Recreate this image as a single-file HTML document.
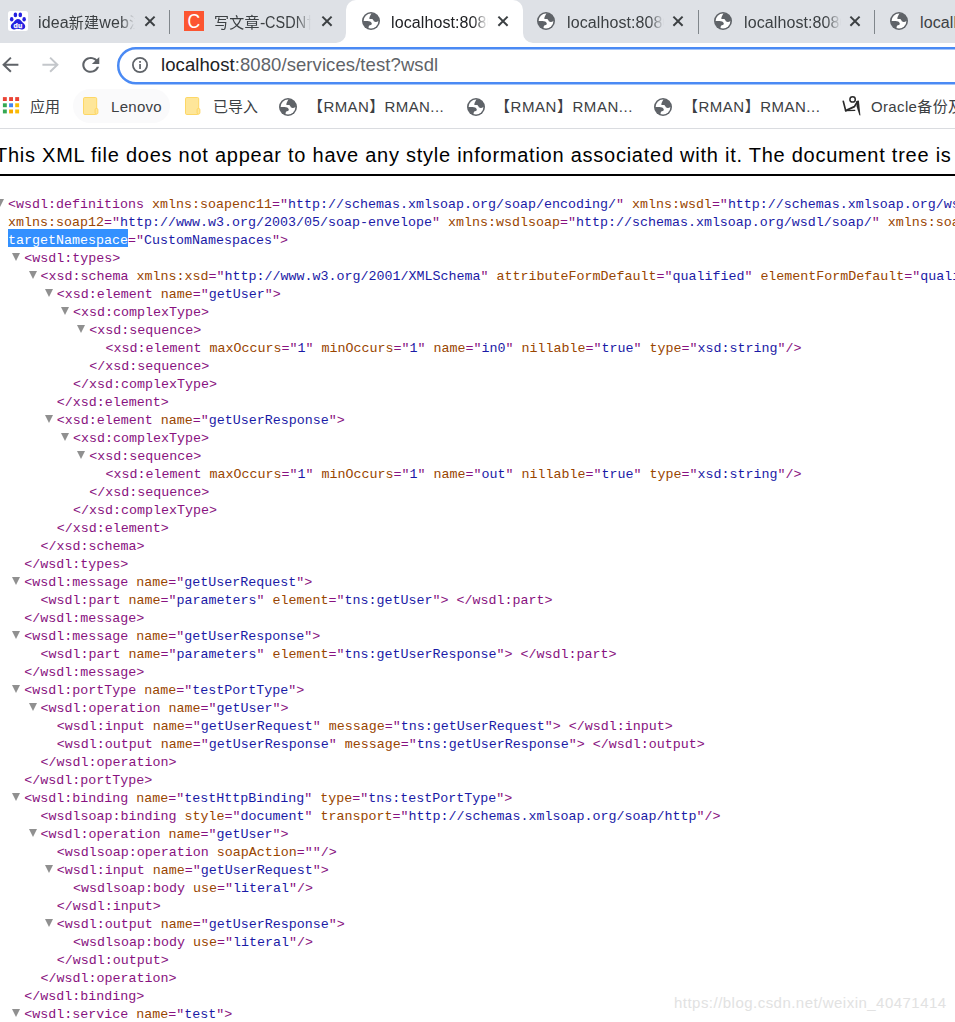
<!DOCTYPE html>
<html lang="zh-CN">
<head>
<meta charset="utf-8">
<title>localhost:8080/services/test?wsdl</title>
<style>
html,body{margin:0;padding:0;}
body{width:955px;height:1022px;overflow:hidden;position:relative;background:#fff;font-family:"Liberation Sans","Noto Sans CJK SC",sans-serif;}
.abs{position:absolute;}
/* ---------- tab strip ---------- */
#tabstrip{position:absolute;left:0;top:0;width:955px;height:43px;background:#dee1e6;}
.tabtitle{position:absolute;top:11px;height:24px;line-height:24px;font-size:16px;letter-spacing:0.1px;color:#3c4043;white-space:nowrap;overflow:hidden;}
.tabtitle span{font-size:15px;letter-spacing:0.3px;}
.tabtitle em{font-style:normal;display:inline-block;transform:scaleX(0.9);transform-origin:0 50%;margin-right:-4.4px;}
.tabtitle.fade{-webkit-mask-image:linear-gradient(90deg,#000 0,#000 calc(100% - 16px),transparent calc(100% - 1px));mask-image:linear-gradient(90deg,#000 0,#000 calc(100% - 16px),transparent calc(100% - 1px));}
.sep{position:absolute;top:10px;width:1px;height:24px;background:#80868b;}
#activetab{position:absolute;left:346px;top:0;width:177px;height:43px;background:#fff;border-radius:10px 10px 0 0;}
/* ---------- toolbar ---------- */
#toolbar{position:absolute;left:0;top:43px;width:955px;height:43px;background:#fff;}
#omni{position:absolute;left:117px;top:47px;width:900px;height:33px;border:2.5px solid #4285f4;border-radius:20px;background:#fff;box-sizing:content-box;}
#url{position:absolute;left:161px;top:53px;height:24px;line-height:24px;font-size:18.5px;letter-spacing:0.08px;color:#5f6368;white-space:nowrap;}
#url em{font-style:normal;color:#202124;}
/* ---------- bookmarks ---------- */
#bookmarks{position:absolute;left:0;top:86px;width:955px;height:42px;background:#fff;border-bottom:1px solid #dadce0;}
.bm{position:absolute;top:95px;height:24px;line-height:24px;font-size:15px;color:#3c4043;white-space:nowrap;}
#pill{position:absolute;left:73px;top:89px;width:97px;height:34px;border-radius:17px;background:#fafafb;}
/* ---------- page ---------- */
#hdr{position:absolute;left:-5px;top:141px;height:28px;line-height:28px;font-size:20px;letter-spacing:0.75px;color:#000;white-space:nowrap;}
#rule{position:absolute;left:0;top:174px;width:955px;height:1.5px;background:#000;}
#xml{position:absolute;left:0;top:193px;width:955px;overflow:hidden;font-family:"Liberation Mono","Noto Sans CJK SC",monospace;font-size:13.333px;color:#881280;}
#xml .l{height:18px;line-height:23px;white-space:pre;position:relative;}
#xml i{font-style:normal;color:#994500;}
#xml b{font-weight:normal;color:#1a1aa6;}
#xml u{text-decoration:none;color:#000;}
#xml mark{background:#3390ff;color:#fff;display:inline-block;height:18px;line-height:23px;vertical-align:top;overflow:hidden;}
#xml s{position:absolute;margin-left:-12px;top:6px;width:0;height:0;border-left:4.5px solid transparent;border-right:4.5px solid transparent;border-top:8px solid #909090;text-decoration:none;}
#wm{position:absolute;left:674px;top:994px;font-size:15px;line-height:18px;color:#e2e2e2;white-space:nowrap;letter-spacing:0.47px;}
</style>
</head>
<body>
<!-- TAB STRIP -->
<div id="tabstrip">
  <div id="activetab"></div>
  <svg class="abs" style="left:336px;top:33px" width="10" height="10" viewBox="0 0 10 10"><path d="M10 0 V10 H0 A10 10 0 0 0 10 0Z" fill="#fff"/></svg>
  <svg class="abs" style="left:523px;top:33px" width="10" height="10" viewBox="0 0 10 10"><path d="M0 0 V10 H10 A10 10 0 0 1 0 0Z" fill="#fff"/></svg>
  <svg class="abs" style="left:8px;top:11px" width="20" height="20" viewBox="0 0 20 20"><rect x="0" y="0" width="20" height="20" rx="2.5" fill="#fff"/><g fill="#2420e0"><ellipse cx="3.7" cy="8.2" rx="1.75" ry="2.2"/><ellipse cx="7.4" cy="3.9" rx="1.8" ry="2.4"/><ellipse cx="12.3" cy="3.9" rx="1.8" ry="2.4"/><ellipse cx="16.1" cy="8.2" rx="1.75" ry="2.2"/><path d="M10 7.9 C12 7.9 13 9.6 14.4 11.2 C16 12.8 17.4 13.6 17.2 15.8 C17 17.8 15.4 18.6 13.6 18.4 C12.2 18.2 11.2 18 10 18 C8.8 18 7.8 18.2 6.4 18.4 C4.6 18.6 3 17.8 2.8 15.8 C2.6 13.6 4 12.8 5.6 11.2 C7 9.6 8 7.9 10 7.9Z"/></g><text x="9.9" y="16.6" font-family="Liberation Sans,sans-serif" font-size="7" font-weight="bold" fill="#fff" stroke="#fff" stroke-width="0.25" text-anchor="middle">du</text></svg><svg class="abs" style="left:184px;top:11px" width="20" height="20" viewBox="0 0 20 20"><rect width="20" height="20" fill="#fc5531"/><text transform="translate(9.9 17.4) scale(0.86 1)" font-family="Liberation Sans,sans-serif" font-size="20.4" fill="#fff" text-anchor="middle">C</text></svg><svg class="abs" style="left:362.0px;top:12.0px" width="18" height="18" viewBox="0 0 18 18"><circle cx="9" cy="9" r="9" fill="#5f6368"/><circle cx="9" cy="9" r="7.4" fill="#fff"/><clipPath id="g371"><circle cx="9" cy="9" r="8"/></clipPath><g clip-path="url(#g371)" fill="#5f6368"><path d="M9.6 1 C8.6 3 7.6 4.6 7.3 6.3 C7.2 7 8 7 9 7 C10.6 6.9 11.2 7.4 11.5 8.6 C11.8 9.8 13 10 14.2 9.9 C15.5 9.8 16.6 9.2 18 8 V0 H9.6Z"/><path d="M0 9.1 H5.6 C7.6 9.2 8.9 9.6 9.6 11 C10.2 12.3 9.4 13 8 13.2 C6.8 13.4 6.8 14.2 6.6 15.4 C6.5 16.3 6.2 17 5.8 18 H0Z"/></g></svg><svg class="abs" style="left:537.0px;top:12.0px" width="18" height="18" viewBox="0 0 18 18"><circle cx="9" cy="9" r="9" fill="#5f6368"/><circle cx="9" cy="9" r="7.4" fill="#fff"/><clipPath id="g546"><circle cx="9" cy="9" r="8"/></clipPath><g clip-path="url(#g546)" fill="#5f6368"><path d="M9.6 1 C8.6 3 7.6 4.6 7.3 6.3 C7.2 7 8 7 9 7 C10.6 6.9 11.2 7.4 11.5 8.6 C11.8 9.8 13 10 14.2 9.9 C15.5 9.8 16.6 9.2 18 8 V0 H9.6Z"/><path d="M0 9.1 H5.6 C7.6 9.2 8.9 9.6 9.6 11 C10.2 12.3 9.4 13 8 13.2 C6.8 13.4 6.8 14.2 6.6 15.4 C6.5 16.3 6.2 17 5.8 18 H0Z"/></g></svg><svg class="abs" style="left:714.0px;top:12.0px" width="18" height="18" viewBox="0 0 18 18"><circle cx="9" cy="9" r="9" fill="#5f6368"/><circle cx="9" cy="9" r="7.4" fill="#fff"/><clipPath id="g723"><circle cx="9" cy="9" r="8"/></clipPath><g clip-path="url(#g723)" fill="#5f6368"><path d="M9.6 1 C8.6 3 7.6 4.6 7.3 6.3 C7.2 7 8 7 9 7 C10.6 6.9 11.2 7.4 11.5 8.6 C11.8 9.8 13 10 14.2 9.9 C15.5 9.8 16.6 9.2 18 8 V0 H9.6Z"/><path d="M0 9.1 H5.6 C7.6 9.2 8.9 9.6 9.6 11 C10.2 12.3 9.4 13 8 13.2 C6.8 13.4 6.8 14.2 6.6 15.4 C6.5 16.3 6.2 17 5.8 18 H0Z"/></g></svg><svg class="abs" style="left:890.0px;top:12.0px" width="18" height="18" viewBox="0 0 18 18"><circle cx="9" cy="9" r="9" fill="#5f6368"/><circle cx="9" cy="9" r="7.4" fill="#fff"/><clipPath id="g899"><circle cx="9" cy="9" r="8"/></clipPath><g clip-path="url(#g899)" fill="#5f6368"><path d="M9.6 1 C8.6 3 7.6 4.6 7.3 6.3 C7.2 7 8 7 9 7 C10.6 6.9 11.2 7.4 11.5 8.6 C11.8 9.8 13 10 14.2 9.9 C15.5 9.8 16.6 9.2 18 8 V0 H9.6Z"/><path d="M0 9.1 H5.6 C7.6 9.2 8.9 9.6 9.6 11 C10.2 12.3 9.4 13 8 13.2 C6.8 13.4 6.8 14.2 6.6 15.4 C6.5 16.3 6.2 17 5.8 18 H0Z"/></g></svg><svg class="abs" style="left:144.0px;top:15.3px" width="12" height="12" viewBox="0 0 12 12"><path d="M1.4 1.6 L10.6 10.8 M10.6 1.6 L1.4 10.8" stroke="#3c4043" stroke-width="2" fill="none"/></svg><svg class="abs" style="left:321.0px;top:15.3px" width="12" height="12" viewBox="0 0 12 12"><path d="M1.4 1.6 L10.6 10.8 M10.6 1.6 L1.4 10.8" stroke="#3c4043" stroke-width="2" fill="none"/></svg><svg class="abs" style="left:497.0px;top:15.3px" width="12" height="12" viewBox="0 0 12 12"><path d="M1.4 1.6 L10.6 10.8 M10.6 1.6 L1.4 10.8" stroke="#3c4043" stroke-width="2" fill="none"/></svg><svg class="abs" style="left:672.0px;top:15.3px" width="12" height="12" viewBox="0 0 12 12"><path d="M1.4 1.6 L10.6 10.8 M10.6 1.6 L1.4 10.8" stroke="#3c4043" stroke-width="2" fill="none"/></svg><svg class="abs" style="left:849.0px;top:15.3px" width="12" height="12" viewBox="0 0 12 12"><path d="M1.4 1.6 L10.6 10.8 M10.6 1.6 L1.4 10.8" stroke="#3c4043" stroke-width="2" fill="none"/></svg>
  <div class="tabtitle fade" style="left:38px;width:98px">idea<span>新建</span>web<span>注</span></div>
  <div class="tabtitle fade" style="left:214px;width:98px"><span>写文章</span>-<em>CSDN</em><span>博</span></div>
  <div class="tabtitle fade" style="left:391px;width:98px;color:#202124">localhost:8080</div>
  <div class="tabtitle fade" style="left:567px;width:98px">localhost:8080</div>
  <div class="tabtitle fade" style="left:744px;width:98px">localhost:8080</div>
  <div class="tabtitle" style="left:920px;width:60px">localhost:8080</div>
  <div class="sep" style="left:169px"></div>
  <div class="sep" style="left:698px"></div>
  <div class="sep" style="left:874px"></div>
</div>
<!-- TOOLBAR -->
<div id="toolbar"></div>
<svg class="abs" style="left:110px;top:44px" width="845" height="44" viewBox="110 44 845 44"><rect x="118.25" y="48.15" width="900" height="35.2" rx="17.6" fill="#fff" stroke="#4a8af4" stroke-width="2.5"/></svg>
<div id="url"><em>localhost</em>:8080/services/test?wsdl</div>
<svg class="abs" style="left:0px;top:54px" width="22" height="22" viewBox="0 0 22 22"><path d="M18.4 10.7 H4 M10.9 3.6 L3.6 10.7 L10.9 17.8" stroke="#5f6368" stroke-width="2" fill="none" stroke-linecap="butt" stroke-linejoin="miter"/></svg><svg class="abs" style="left:40px;top:54px" width="22" height="22" viewBox="0 0 22 22"><path d="M2.4 10.7 H17 M10.1 3.6 L17.4 10.7 L10.1 17.8" stroke="#c4c7cb" stroke-width="2" fill="none"/></svg><svg class="abs" style="left:78.4px;top:53px" width="25.6" height="24" viewBox="0 0 24.04 24.24" preserveAspectRatio="none"><path transform="scale(1 1)" d="M17.65 6.35C16.2 4.9 14.21 4 12 4c-4.42 0-7.99 3.58-7.99 8s3.57 8 7.99 8c3.73 0 6.84-2.55 7.73-6h-2.08c-.82 2.33-3.04 4-5.65 4-3.31 0-6-2.69-6-6s2.69-6 6-6c1.66 0 3.14.69 4.22 1.78L13 11h7V4l-2.35 2.35z" fill="#5f6368"/></svg><svg class="abs" style="left:131.4px;top:56.1px" width="18" height="18" viewBox="0 0 18 18"><circle cx="9" cy="9" r="7.1" fill="none" stroke="#5f6368" stroke-width="1.8"/><rect x="8.2" y="8" width="1.7" height="5" fill="#5f6368"/><rect x="8.2" y="5" width="1.7" height="1.8" fill="#5f6368"/></svg>
<!-- BOOKMARKS -->
<div id="bookmarks"></div>
<div id="pill"></div>
<svg class="abs" style="left:0;top:90px" width="24" height="30" viewBox="0 90 24 30"><rect x="2.9" y="97.1" width="3.9" height="3.9" fill="#ea4335"/><rect x="9.1" y="97.1" width="3.9" height="3.9" fill="#ea4335"/><rect x="15.2" y="97.1" width="3.9" height="3.9" fill="#ea4335"/><rect x="2.9" y="103.3" width="3.9" height="3.9" fill="#34a853"/><rect x="9.1" y="103.3" width="3.9" height="3.9" fill="#4285f4"/><rect x="15.2" y="103.3" width="3.9" height="3.9" fill="#fbbc04"/><rect x="2.9" y="109.5" width="3.9" height="3.9" fill="#34a853"/><rect x="9.1" y="109.5" width="3.9" height="3.9" fill="#f9ab00"/><rect x="15.2" y="109.5" width="3.9" height="3.9" fill="#fbbc04"/></svg><svg class="abs" style="left:83.2px;top:97.0px" width="17" height="19" viewBox="0 0 17 19"><rect x="0.5" y="0.5" width="13.2" height="17" rx="1.3" fill="#fee699" stroke="#fdd766" stroke-width="1"/><rect x="12.1" y="11.5" width="2.8" height="5.5" rx="1.2" fill="#fee699" stroke="#fdd45c" stroke-width="0.9"/></svg><svg class="abs" style="left:185.2px;top:97.0px" width="17" height="19" viewBox="0 0 17 19"><rect x="0.5" y="0.5" width="13.2" height="17" rx="1.3" fill="#fee699" stroke="#fdd766" stroke-width="1"/><rect x="12.1" y="11.5" width="2.8" height="5.5" rx="1.2" fill="#fee699" stroke="#fdd45c" stroke-width="0.9"/></svg><svg class="abs" style="left:279.0px;top:97.5px" width="18" height="18" viewBox="0 0 18 18"><circle cx="9" cy="9" r="9" fill="#5f6368"/><circle cx="9" cy="9" r="7.4" fill="#fff"/><clipPath id="g288"><circle cx="9" cy="9" r="8"/></clipPath><g clip-path="url(#g288)" fill="#5f6368"><path d="M9.6 1 C8.6 3 7.6 4.6 7.3 6.3 C7.2 7 8 7 9 7 C10.6 6.9 11.2 7.4 11.5 8.6 C11.8 9.8 13 10 14.2 9.9 C15.5 9.8 16.6 9.2 18 8 V0 H9.6Z"/><path d="M0 9.1 H5.6 C7.6 9.2 8.9 9.6 9.6 11 C10.2 12.3 9.4 13 8 13.2 C6.8 13.4 6.8 14.2 6.6 15.4 C6.5 16.3 6.2 17 5.8 18 H0Z"/></g></svg><svg class="abs" style="left:467.0px;top:97.5px" width="18" height="18" viewBox="0 0 18 18"><circle cx="9" cy="9" r="9" fill="#5f6368"/><circle cx="9" cy="9" r="7.4" fill="#fff"/><clipPath id="g476"><circle cx="9" cy="9" r="8"/></clipPath><g clip-path="url(#g476)" fill="#5f6368"><path d="M9.6 1 C8.6 3 7.6 4.6 7.3 6.3 C7.2 7 8 7 9 7 C10.6 6.9 11.2 7.4 11.5 8.6 C11.8 9.8 13 10 14.2 9.9 C15.5 9.8 16.6 9.2 18 8 V0 H9.6Z"/><path d="M0 9.1 H5.6 C7.6 9.2 8.9 9.6 9.6 11 C10.2 12.3 9.4 13 8 13.2 C6.8 13.4 6.8 14.2 6.6 15.4 C6.5 16.3 6.2 17 5.8 18 H0Z"/></g></svg><svg class="abs" style="left:654.0px;top:97.5px" width="18" height="18" viewBox="0 0 18 18"><circle cx="9" cy="9" r="9" fill="#5f6368"/><circle cx="9" cy="9" r="7.4" fill="#fff"/><clipPath id="g663"><circle cx="9" cy="9" r="8"/></clipPath><g clip-path="url(#g663)" fill="#5f6368"><path d="M9.6 1 C8.6 3 7.6 4.6 7.3 6.3 C7.2 7 8 7 9 7 C10.6 6.9 11.2 7.4 11.5 8.6 C11.8 9.8 13 10 14.2 9.9 C15.5 9.8 16.6 9.2 18 8 V0 H9.6Z"/><path d="M0 9.1 H5.6 C7.6 9.2 8.9 9.6 9.6 11 C10.2 12.3 9.4 13 8 13.2 C6.8 13.4 6.8 14.2 6.6 15.4 C6.5 16.3 6.2 17 5.8 18 H0Z"/></g></svg><svg class="abs" style="left:840px;top:94px" width="24" height="24" viewBox="840 94 24 24"><g stroke="#2b2b2b" fill="none" stroke-linecap="round" stroke-linejoin="round"><circle cx="852.6" cy="99.4" r="2.7" stroke-width="1.5"/><path d="M843.3 101.4 L845.7 110.6" stroke-width="1.7"/><path d="M845.7 110.6 L854.8 110.3" stroke-width="1.3"/><path d="M845.7 110.6 L854.4 106.6 L857.4 101.6" stroke-width="1.8"/></g><path d="M856.2 101.2 L858.9 100.4 L860.4 115.4 L859.4 115.2 L856.6 106.4Z" fill="#2b2b2b"/></svg>
<div class="bm" style="left:30px">应用</div>
<div class="bm" style="left:111px;letter-spacing:0.3px">Lenovo</div>
<div class="bm" style="left:213px">已导入</div>
<div class="bm" style="left:308px;letter-spacing:0.4px">【RMAN】RMAN...</div>
<div class="bm" style="left:495px;letter-spacing:0.55px">【RMAN】RMAN...</div>
<div class="bm" style="left:683px;letter-spacing:0.5px">【RMAN】RMAN...</div>
<div class="bm" style="left:871px;letter-spacing:0.35px">Oracle备份及恢复</div>
<!-- PAGE -->
<div id="hdr">This XML file does not appear to have any style information associated with it. The document tree is shown below.</div>
<div id="rule"></div>
<div id="xml">
<div class="l" style="padding-left:8px"><s></s>&lt;wsdl:definitions <i>xmlns:soapenc11</i>=&quot;<b>http://schemas.xmlsoap.org/soap/encoding/</b>&quot; <i>xmlns:wsdl</i>=&quot;<b>http://schemas.xmlsoap.org/wsdl/</b>&quot; <i>xmlns:tns</i>=&quot;<b>CustomNamespaces</b>&quot;</div>
<div class="l" style="padding-left:8px"><i>xmlns:soap12</i>=&quot;<b>http://www.w3.org/2003/05/soap-envelope</b>&quot; <i>xmlns:wsdlsoap</i>=&quot;<b>http://schemas.xmlsoap.org/wsdl/soap/</b>&quot; <i>xmlns:soap11</i>=&quot;<b>http://schemas.xmlsoap.org/soap/envelope/</b>&quot;</div>
<div class="l" style="padding-left:8px"><mark>targetNamespace</mark>=&quot;<b>CustomNamespaces</b>&quot;&gt;</div>
<div class="l" style="padding-left:24.25px"><s></s>&lt;wsdl:types&gt;</div>
<div class="l" style="padding-left:40.5px"><s></s>&lt;xsd:schema <i>xmlns:xsd</i>=&quot;<b>http://www.w3.org/2001/XMLSchema</b>&quot; <i>attributeFormDefault</i>=&quot;<b>qualified</b>&quot; <i>elementFormDefault</i>=&quot;<b>qualified</b>&quot; <i>targetNamespace</i>=&quot;<b>CustomNamespaces</b>&quot;&gt;</div>
<div class="l" style="padding-left:56.75px"><s></s>&lt;xsd:element <i>name</i>=&quot;<b>getUser</b>&quot;&gt;</div>
<div class="l" style="padding-left:73px"><s></s>&lt;xsd:complexType&gt;</div>
<div class="l" style="padding-left:89.25px"><s></s>&lt;xsd:sequence&gt;</div>
<div class="l" style="padding-left:105.5px">&lt;xsd:element <i>maxOccurs</i>=&quot;<b>1</b>&quot; <i>minOccurs</i>=&quot;<b>1</b>&quot; <i>name</i>=&quot;<b>in0</b>&quot; <i>nillable</i>=&quot;<b>true</b>&quot; <i>type</i>=&quot;<b>xsd:string</b>&quot;/&gt;</div>
<div class="l" style="padding-left:89.25px">&lt;/xsd:sequence&gt;</div>
<div class="l" style="padding-left:73px">&lt;/xsd:complexType&gt;</div>
<div class="l" style="padding-left:56.75px">&lt;/xsd:element&gt;</div>
<div class="l" style="padding-left:56.75px"><s></s>&lt;xsd:element <i>name</i>=&quot;<b>getUserResponse</b>&quot;&gt;</div>
<div class="l" style="padding-left:73px"><s></s>&lt;xsd:complexType&gt;</div>
<div class="l" style="padding-left:89.25px"><s></s>&lt;xsd:sequence&gt;</div>
<div class="l" style="padding-left:105.5px">&lt;xsd:element <i>maxOccurs</i>=&quot;<b>1</b>&quot; <i>minOccurs</i>=&quot;<b>1</b>&quot; <i>name</i>=&quot;<b>out</b>&quot; <i>nillable</i>=&quot;<b>true</b>&quot; <i>type</i>=&quot;<b>xsd:string</b>&quot;/&gt;</div>
<div class="l" style="padding-left:89.25px">&lt;/xsd:sequence&gt;</div>
<div class="l" style="padding-left:73px">&lt;/xsd:complexType&gt;</div>
<div class="l" style="padding-left:56.75px">&lt;/xsd:element&gt;</div>
<div class="l" style="padding-left:40.5px">&lt;/xsd:schema&gt;</div>
<div class="l" style="padding-left:24.25px">&lt;/wsdl:types&gt;</div>
<div class="l" style="padding-left:24.25px"><s></s>&lt;wsdl:message <i>name</i>=&quot;<b>getUserRequest</b>&quot;&gt;</div>
<div class="l" style="padding-left:40.5px">&lt;wsdl:part <i>name</i>=&quot;<b>parameters</b>&quot; <i>element</i>=&quot;<b>tns:getUser</b>&quot;&gt;<u> </u>&lt;/wsdl:part&gt;</div>
<div class="l" style="padding-left:24.25px">&lt;/wsdl:message&gt;</div>
<div class="l" style="padding-left:24.25px"><s></s>&lt;wsdl:message <i>name</i>=&quot;<b>getUserResponse</b>&quot;&gt;</div>
<div class="l" style="padding-left:40.5px">&lt;wsdl:part <i>name</i>=&quot;<b>parameters</b>&quot; <i>element</i>=&quot;<b>tns:getUserResponse</b>&quot;&gt;<u> </u>&lt;/wsdl:part&gt;</div>
<div class="l" style="padding-left:24.25px">&lt;/wsdl:message&gt;</div>
<div class="l" style="padding-left:24.25px"><s></s>&lt;wsdl:portType <i>name</i>=&quot;<b>testPortType</b>&quot;&gt;</div>
<div class="l" style="padding-left:40.5px"><s></s>&lt;wsdl:operation <i>name</i>=&quot;<b>getUser</b>&quot;&gt;</div>
<div class="l" style="padding-left:56.75px">&lt;wsdl:input <i>name</i>=&quot;<b>getUserRequest</b>&quot; <i>message</i>=&quot;<b>tns:getUserRequest</b>&quot;&gt;<u> </u>&lt;/wsdl:input&gt;</div>
<div class="l" style="padding-left:56.75px">&lt;wsdl:output <i>name</i>=&quot;<b>getUserResponse</b>&quot; <i>message</i>=&quot;<b>tns:getUserResponse</b>&quot;&gt;<u> </u>&lt;/wsdl:output&gt;</div>
<div class="l" style="padding-left:40.5px">&lt;/wsdl:operation&gt;</div>
<div class="l" style="padding-left:24.25px">&lt;/wsdl:portType&gt;</div>
<div class="l" style="padding-left:24.25px"><s></s>&lt;wsdl:binding <i>name</i>=&quot;<b>testHttpBinding</b>&quot; <i>type</i>=&quot;<b>tns:testPortType</b>&quot;&gt;</div>
<div class="l" style="padding-left:40.5px">&lt;wsdlsoap:binding <i>style</i>=&quot;<b>document</b>&quot; <i>transport</i>=&quot;<b>http://schemas.xmlsoap.org/soap/http</b>&quot;/&gt;</div>
<div class="l" style="padding-left:40.5px"><s></s>&lt;wsdl:operation <i>name</i>=&quot;<b>getUser</b>&quot;&gt;</div>
<div class="l" style="padding-left:56.75px">&lt;wsdlsoap:operation <i>soapAction</i>=&quot;<b></b>&quot;/&gt;</div>
<div class="l" style="padding-left:56.75px"><s></s>&lt;wsdl:input <i>name</i>=&quot;<b>getUserRequest</b>&quot;&gt;</div>
<div class="l" style="padding-left:73px">&lt;wsdlsoap:body <i>use</i>=&quot;<b>literal</b>&quot;/&gt;</div>
<div class="l" style="padding-left:56.75px">&lt;/wsdl:input&gt;</div>
<div class="l" style="padding-left:56.75px"><s></s>&lt;wsdl:output <i>name</i>=&quot;<b>getUserResponse</b>&quot;&gt;</div>
<div class="l" style="padding-left:73px">&lt;wsdlsoap:body <i>use</i>=&quot;<b>literal</b>&quot;/&gt;</div>
<div class="l" style="padding-left:56.75px">&lt;/wsdl:output&gt;</div>
<div class="l" style="padding-left:40.5px">&lt;/wsdl:operation&gt;</div>
<div class="l" style="padding-left:24.25px">&lt;/wsdl:binding&gt;</div>
<div class="l" style="padding-left:24.25px"><s></s>&lt;wsdl:service <i>name</i>=&quot;<b>test</b>&quot;&gt;</div>

</div>
<div id="wm">https://blog.csdn.net/weixin_40471414</div>
</body>
</html>
